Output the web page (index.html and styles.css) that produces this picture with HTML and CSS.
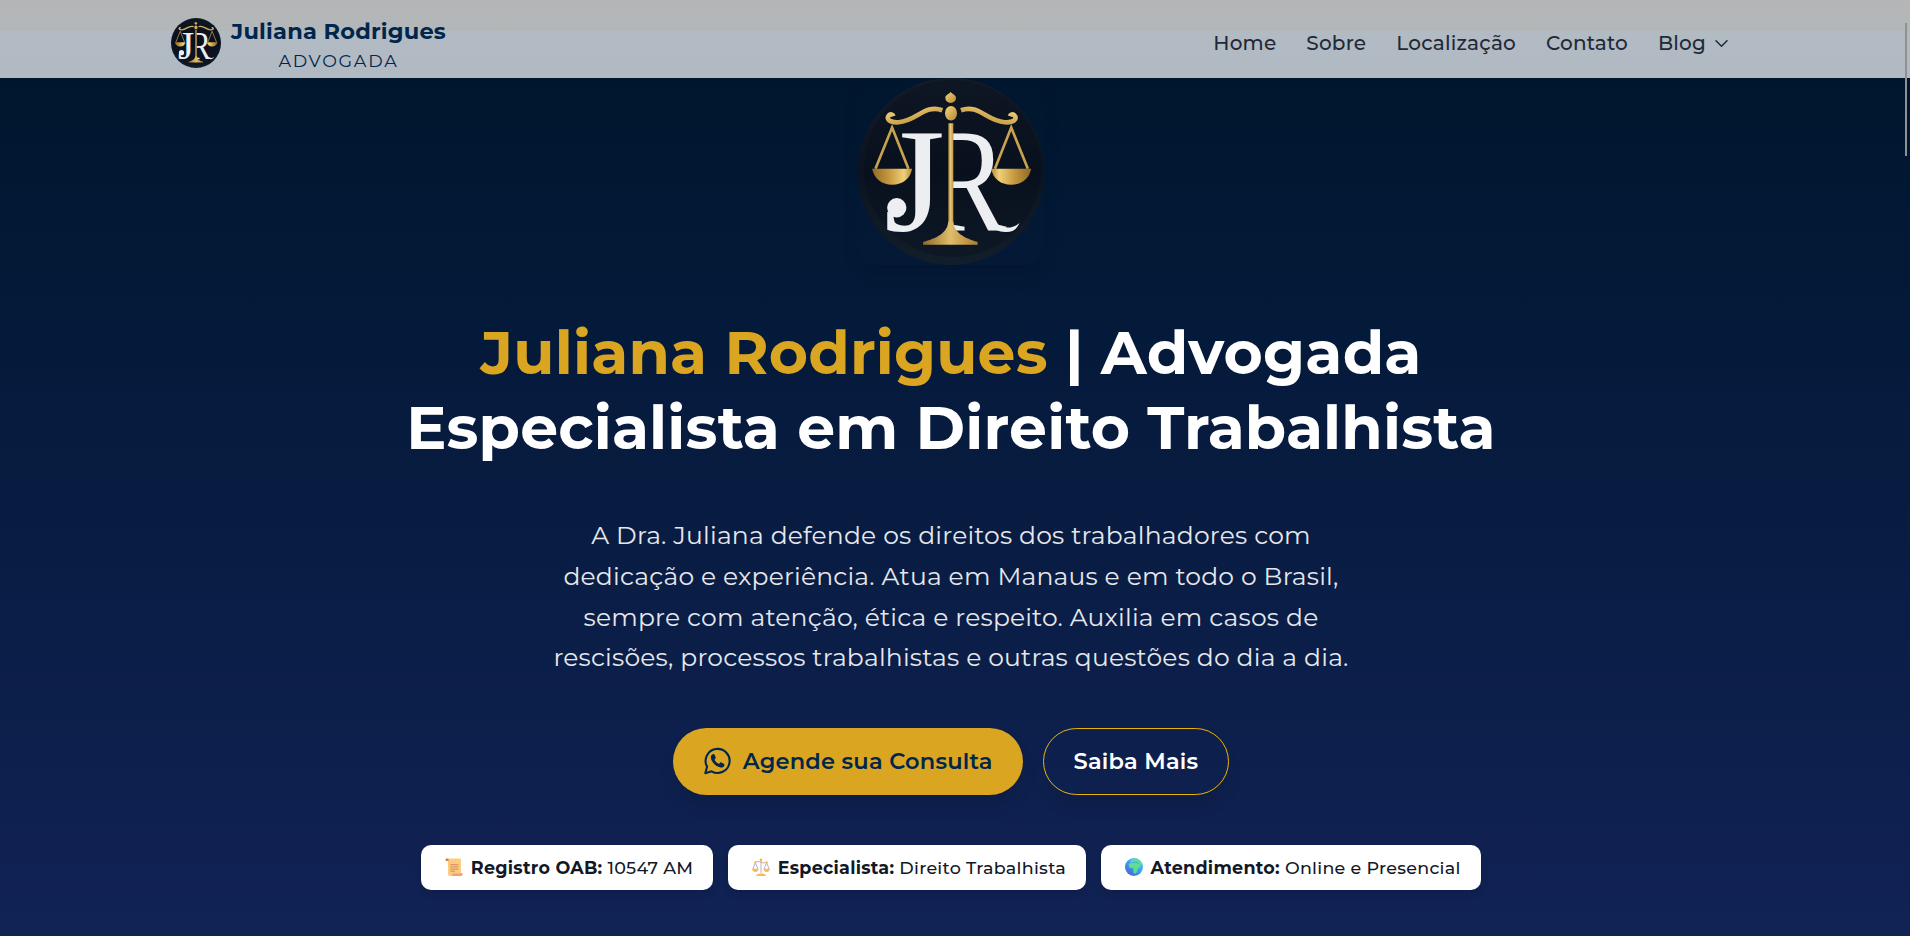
FILE: index.html
```
<!DOCTYPE html>
<html lang="pt-BR">
<head>
<meta charset="utf-8">
<title>Juliana Rodrigues | Advogada</title>
<link rel="stylesheet" href="styles.css">
</head>
<body>
<svg class="defs" width="0" height="0" aria-hidden="true">
  <defs>
    <linearGradient id="gold" x1="0" y1="0" x2="1" y2="1"><stop offset="0" stop-color="#f3d98a"/><stop offset=".5" stop-color="#d5ad55"/><stop offset="1" stop-color="#b48a38"/></linearGradient>
    <linearGradient id="pan" x1="0" y1="0" x2="1" y2="0"><stop offset="0" stop-color="#8f6a25"/><stop offset=".45" stop-color="#c99c42"/><stop offset=".8" stop-color="#efd07a"/><stop offset="1" stop-color="#b88b35"/></linearGradient>
    <linearGradient id="pole" gradientUnits="userSpaceOnUse" x1="322" y1="0" x2="341" y2="0"><stop offset="0" stop-color="#8d6927"/><stop offset=".5" stop-color="#e6c676"/><stop offset="1" stop-color="#b88d3d"/></linearGradient>
    <linearGradient id="base" x1="0" y1="0" x2="1" y2="0"><stop offset="0" stop-color="#8d6927"/><stop offset=".5" stop-color="#e0bd6a"/><stop offset="1" stop-color="#a97e30"/></linearGradient>
    <linearGradient id="disc" x1="0" y1="0" x2="0" y2="1"><stop offset="0" stop-color="#131b28"/><stop offset=".5" stop-color="#0b1320"/><stop offset="1" stop-color="#131e2b"/></linearGradient>
    <clipPath id="rclip"><rect x="339" y="150" width="230" height="360"/></clipPath>
    <symbol id="logo" viewBox="52 24 562 562">
      <circle cx="333" cy="305" r="281" fill="url(#disc)"/>
      <circle cx="338" cy="296" r="266" fill="#050c18" opacity=".28"/>
      <g fill="#eceef1" font-family="'Liberation Serif', serif" font-size="444">
        <text transform="translate(132 483) scale(1.06 1)">J</text>
        <g clip-path="url(#rclip)"><text transform="translate(266 483) scale(.79 1)">R</text></g>
      </g>
      <circle cx="170" cy="414" r="29" fill="#eceef1"/>
      <path d="M452 440C474 472 506 486 539 460Q526 489 496 487Q466 487 444 460Z" fill="#eceef1"/>
      <path d="M325 160H340V480H325Z" fill="url(#pole)"/>
      <path d="M325 455H340C342 490 375 505 413 517V525H249V517C290 505 322 490 325 455Z" fill="url(#base)"/>
      <ellipse cx="333" cy="130" rx="18" ry="22" fill="url(#gold)"/>
      <path d="M332 65C336 73 348 73 348 84A16 15 0 0 1 316 84C316 73 328 73 332 65Z" fill="url(#gold)"/>
      <g id="arm">
        <path d="M307 121C255 101 229 154 176 157C148 159 137 147 146 137C151 131 158 133 160 139" fill="none" stroke="url(#gold)" stroke-width="14"/>
        <path d="M106 297L156 173L205 297" fill="none" stroke="#c9a24e" stroke-width="8"/>
        <path d="M96 297H216C212 325 188 345 156 345S101 325 96 297Z" fill="url(#pan)"/>
      </g>
      <use href="#arm" transform="matrix(-1 0 0 1 670 0)"/>
    </symbol>
  </defs>
</svg>

<header class="header">
  <div class="header-inner">
    <a class="brand">
      <svg class="brand-logo"><use href="#logo"/></svg>
      <span class="brand-text"><strong>Juliana Rodrigues</strong><small>ADVOGADA</small></span>
    </a>
    <nav class="nav">
      <a>Home</a><a>Sobre</a><a>Localização</a><a>Contato</a>
      <a class="nav-more">Blog
        <svg width="15" height="15" viewBox="0 0 15 15" fill="none" stroke="currentColor" stroke-width="1.5" stroke-linecap="round" stroke-linejoin="round"><path d="M2 4.8l5.5 5.4L13 4.8"/></svg>
      </a>
    </nav>
  </div>
</header>

<main class="hero">
  <svg class="hero-logo"><use href="#logo"/></svg>
  <h1><span>Juliana Rodrigues</span> | Advogada<br>Especialista em Direito Trabalhista</h1>
  <p class="lead">A Dra. Juliana defende os direitos dos trabalhadores com<br>dedicação e experiência. Atua em Manaus e em todo o Brasil,<br>sempre com atenção, ética e respeito. Auxilia em casos de<br>rescisões, processos trabalhistas e outras questões do dia a dia.</p>
  <div class="actions">
    <a class="btn btn-gold">
      <svg width="28" height="28" viewBox="0 0 28 28" fill="none"><path d="M2.3 26.2L4.1 19.7A12 12 0 1 1 8.6 24.3Z" stroke="currentColor" stroke-width="2.1" stroke-linejoin="round"/><path d="M9.8 7.2C8.5 7.6 7.7 9 7.9 10.7C8.4 15.2 13.1 19.9 17.7 20.5C19.7 20.7 21.3 19.6 21.4 17.9C21.5 17.3 21.3 17 20.8 16.7L18.3 15.4C17.8 15.2 17.4 15.2 17 15.7L16 16.9C14.1 16.2 12.3 14.5 11.5 12.7L12.5 11.5C12.8 11.1 12.7 10.7 12.6 10.2L11.6 7.8C11.3 7.1 10.6 7 9.8 7.2Z" fill="currentColor"/></svg>
      Agende sua Consulta
    </a>
    <a class="btn btn-line">Saiba Mais</a>
  </div>
  <div class="facts">
    <div class="fact">
      <svg width="18" height="18" viewBox="0 0 18 18"><path d="M2 .5H15Q16 .5 16 2V15H17.5Q18 18 15.5 18H5Q3 18 3 15.5V3H1Q0 .5 2 .5Z" fill="#fbcb7e"/><path d="M3 3H1Q-.2.5 2 .5T3.5 3Z" fill="#d57a62"/><path d="M7.5 15.6H17.5Q18 18 15.5 18H7Z" fill="#eda081"/><path d="M5.3 6.7H13.4M5.3 8.9H13.4M5.3 11.1H13.4M5.3 13.2H10" stroke="#c77c5c" stroke-width=".8"/></svg>
      <span><b>Registro OAB:</b> 10547 AM</span>
    </div>
    <div class="fact">
      <svg width="18" height="18" viewBox="0 0 18 18" fill="none"><path d="M9 2V15M3.3 4.2Q6.5 2.5 9 4.2T14.7 4.2M3.3 4.7L.9 11M3.3 4.7L6 11M14.7 4.7L12 11M14.7 4.7L17.1 11" stroke="#b7a5bd" stroke-width=".9"/><path d="M0 10.8H6.6Q6 14 3.3 14T0 10.8ZM11.4 10.8H18Q17.4 14 14.7 14T11.4 10.8ZM4 18Q4.3 15.6 9 15.4T14 18Z" fill="#fdb951"/><circle cx="9" cy="1.7" r="1.2" fill="#fdb13b"/><circle cx="3.3" cy="4.2" r="1" fill="#fdb13b"/><circle cx="14.7" cy="4.2" r="1" fill="#fdb13b"/></svg>
      <span><b>Especialista:</b> Direito Trabalhista</span>
    </div>
    <div class="fact">
      <svg width="18" height="18" viewBox="0 0 18 18"><defs><linearGradient id="sea" x1=".2" y1="1" x2=".9" y2=".1"><stop stop-color="#4c5fd0"/><stop offset=".5" stop-color="#3b9df0"/><stop offset="1" stop-color="#45d0fa"/></linearGradient></defs><circle cx="9" cy="9" r="9" fill="url(#sea)"/><path d="M5.5 2.5Q8.5-.2 12 .6Q15.7 2 17 5.5L14.8 7.5L15.5 9L12.8 10.5L11.8 14.2L9.7 16L8.5 14.2V10.5L4.4 9.4L3.7 6.6L6 4.4Z" fill="#62dc92"/><path d="M7.2 4.6L10.5 4L14 5.4M1.2 5.5L3 3.3" fill="none" stroke="#3b9df0" stroke-width=".9"/></svg>
      <span><b>Atendimento:</b> Online e Presencial</span>
    </div>
  </div>
</main>
<div class="scroll-thumb"></div>
</body>
</html>
```
FILE: styles.css
```
* { box-sizing: border-box; }
body {
  margin: 0;
  height: 936px;
  overflow: hidden;
  font-family: Montserrat, "Open Sans", sans-serif;
  letter-spacing: .2px;
  background: linear-gradient(#001529, #001730 12%, #112255);
}
.defs { position: absolute; }
.header {
  height: 78px;
  background: linear-gradient(#b5b5b6, #b3b7b9 31px, #b2bac2 31px, #b1b9c2);
}
.header-inner {
  width: 1558px;
  height: 78px;
  margin-left: 171px;
  display: flex;
  justify-content: space-between;
}
.brand { display: flex; gap: 10px; padding-top: 18px; color: #00264d; }
.brand-logo { width: 50px; height: 50px; }
.brand-text { display: flex; flex-direction: column; align-items: center; margin-top: -3px; }
.brand-text strong { font-size: 22.5px; line-height: 32px; font-weight: 700; }
.brand-text small { font-size: 17.5px; line-height: 27px; letter-spacing: 1.75px; }
.nav {
  display: flex;
  align-items: flex-start;
  gap: 30px;
  padding-top: 29px;
  font-size: 20px;
  line-height: 28px;
  font-weight: 500;
  letter-spacing: .2px;
  color: #1f2937;
}
.nav-more { display: flex; align-items: center; gap: 8px; }
.hero {
  width: 1902px;
  display: flex;
  flex-direction: column;
  align-items: center;
  text-align: center;
}
.hero-logo {
  width: 188px;
  height: 187px;
  margin-right: 1px;
  border-radius: 20px;
  box-shadow: 0 12px 19px -4px rgba(0, 0, 0, .12);
}
h1 {
  margin: 50px 0 0;
  font-size: 60px;
  line-height: 75px;
  font-weight: 700;
  letter-spacing: .19px;
  color: #fff;
}
h1 span { color: #daa520; }
.lead {
  margin: 50.4px 0 0;
  font-size: 25px;
  line-height: 40.625px;
  color: #e5e7eb;
}
.actions { display: flex; gap: 20px; margin-top: 50.1px; }
.btn {
  height: 67px;
  padding: 0 30px;
  display: flex;
  align-items: center;
  border-radius: 34px;
  font-size: 22.5px;
  font-weight: 600;
  box-shadow: 0 12px 19px -4px rgba(0, 0, 0, .12);
}
.btn-gold { gap: 12px; background: #daa520; color: #00264d; }
.btn-line { border: 1px solid #eab308; color: #fff; }
.facts { display: flex; gap: 15px; margin-top: 50px; }
.fact {
  height: 45px;
  padding: 0 20px 0 23.5px;
  display: flex;
  align-items: center;
  gap: 8px;
  border-radius: 10px;
  background: #fff;
  color: #111827;
  font-size: 17.5px;
  font-weight: 500;
  letter-spacing: .27px;
  box-shadow: 0 5px 8px -1px rgba(0, 0, 0, .12);
}
.fact b { font-weight: 700; }
.scroll-thumb {
  position: absolute;
  left: 1905px;
  top: 23px;
  width: 2px;
  height: 133px;
  background: #919191;
}
```
